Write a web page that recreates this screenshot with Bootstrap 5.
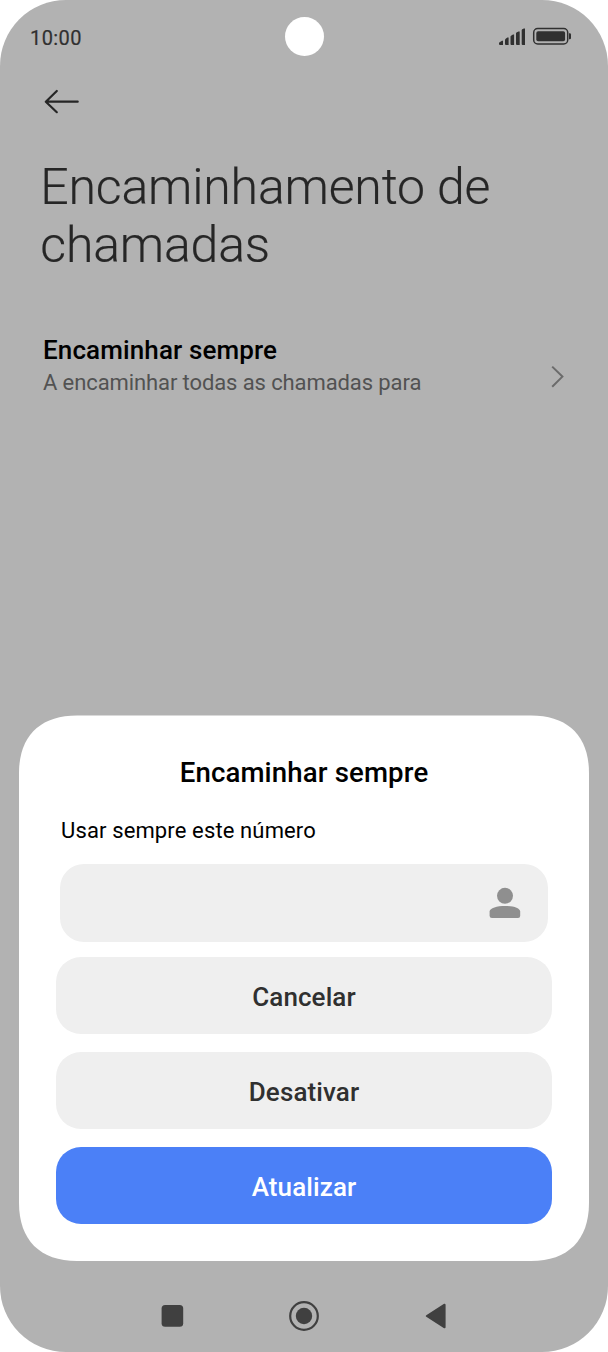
<!DOCTYPE html>
<html lang="pt">
<head>
<meta charset="utf-8">
<meta name="viewport" content="width=device-width, initial-scale=1">
<title>Encaminhamento de chamadas</title>
<link href="https://cdn.jsdelivr.net/npm/bootstrap@5.3.0/dist/css/bootstrap.min.css" rel="stylesheet">
<style>
  body { font-family: Roboto, "Liberation Sans", sans-serif; background: #fff; color: #000; }
  svg { display: block; flex: none; }
  .phone { width: 608px; height: 1352px; background: #b2b2b2; border-radius: 66px; }
  .statusbar { height: 74px; padding: 0 36px 0 30px; color: #303030; }
  .clock { font-size: 20px; line-height: 24px; letter-spacing: .4px; padding-top: 2px; -webkit-text-stroke: .2px #303030; }
  .camera { width: 39px; height: 39px; left: 284.5px; top: 17.3px; }
  .back { margin: 14px 0 0 44px; }
  .page-title { font-size: 50px; line-height: 58px; font-weight: 300; letter-spacing: -.18px; color: #262626; margin: 42px 0 0 40.3px; -webkit-text-stroke: .2px #262626; }
  .entry { margin: 59px 43px 0 43px; }
  .entry-name { font-size: 26px; line-height: 34px; font-weight: 500; letter-spacing: .12px; }
  .entry-info { font-size: 22px; line-height: 31px; letter-spacing: -.1px; color: #525252; }
  .sheet { width: 570px; height: 546px; margin: auto 19px 0 19px; padding: 40px 37px 0; background: #fff;
    clip-path: path("M0 58 C0 21 21 .4 58 .4 H512 C549 .4 570 21 570 58 V488 C570 525 549 546 512 546 H58 C21 546 0 525 0 488 Z"); }
  .sheet-title { font-size: 27.6px; line-height: 36px; font-weight: 500; letter-spacing: .14px; }
  .sheet-label { font-size: 22px; line-height: 30px; letter-spacing: .13px; margin: 25px 0 17.5px 5px; }
  .number-field { height: 78px; border-radius: 24px; background: #efefef; margin: 0 4px 15.5px; padding: 0 27px; }
  .sheet .btn { height: 77px; border: 0; border-radius: 25px; font-size: 26px; font-weight: 500; letter-spacing: .1px; background: #efefef; color: #303030; margin-bottom: 18.2px; padding: 3px 0 0; }
  .sheet .btn-update { background: #4b80f7; color: #fff; }
  .navkeys { height: 91px; padding: 19px 161px 0 161px; }
</style>
</head>
<body>
<div class="phone d-flex flex-column position-relative overflow-hidden">
  <header class="statusbar d-flex align-items-center justify-content-between">
    <span class="clock">10:00</span>
    <svg width="73" height="20" viewBox="0 0 73 20" fill="#303030">
      <path d="M0 16.3Q0 15.5 1 15L3 13.8H4V17.9H1Q0 17.9 0 17Z"/>
      <path d="M6 13Q6 12 7 11.4L8.4 10.6H9.6V17.9H7Q6 17.9 6 17Z"/>
      <path d="M11.5 9.7Q11.5 8.9 12.4 8.4L14 7.5H15.1V17.9H12.5Q11.5 17.9 11.5 17Z"/>
      <path d="M17 6.6Q17 5.8 17.9 5.3L19.5 4.4H20.7V17.9H18Q17 17.9 17 17Z"/>
      <path d="M22.7 3.4Q22.7 2.6 23.6 2.1L25 1.4H26V17.9H23.7Q22.7 17.9 22.7 17Z"/>
      <rect x="34.7" y="1.6" width="34" height="15.3" rx="4" fill="none" stroke="#303030" stroke-width="1.5"/>
      <rect x="37.3" y="4.2" width="28.8" height="10" rx="1.8"/>
      <path d="M70 6.2h.7q1.3 0 1.3 1.3v3.4q0 1.3-1.3 1.3H70z"/>
    </svg>
  </header>
  <span class="camera position-absolute rounded-circle bg-white"></span>

  <svg class="back" width="36" height="28" viewBox="0 0 36 28" fill="none" stroke="#262626" stroke-width="2.2" stroke-linecap="round" stroke-linejoin="round"><path d="M12.8 3 1.8 13.7 12.8 24.2M2.5 13.7H33.7"/></svg>
  <h1 class="page-title mb-0">Encaminhamento de<br>chamadas</h1>

  <div class="entry d-flex justify-content-between align-items-end">
    <div>
      <div class="entry-name">Encaminhar sempre</div>
      <div class="entry-info">A encaminhar todas as chamadas para</div>
    </div>
    <svg width="15" height="42" viewBox="0 0 15 42" fill="none" stroke="#6b6b6b" stroke-width="2"><path d="M2.2 10.6 12.4 20.6 2.2 30.7"/></svg>
  </div>

  <section class="sheet d-flex flex-column">
    <h2 class="sheet-title text-center mb-0">Encaminhar sempre</h2>
    <div class="sheet-label">Usar sempre este número</div>
    <div class="number-field d-flex align-items-center justify-content-end">
      <svg width="32" height="32" viewBox="0 0 32 32" fill="#8f8f8f"><circle cx="16" cy="8.8" r="8"/><path d="M.6 24.6C.6 17 31.2 17 31.2 24.6V28.8Q31.2 31 29 31H3Q.6 31 .6 28.8Z"/></svg>
    </div>
    <button type="button" class="btn w-100">Cancelar</button>
    <button type="button" class="btn w-100">Desativar</button>
    <button type="button" class="btn btn-update w-100">Atualizar</button>
  </section>

  <nav class="navkeys d-flex align-items-center justify-content-between">
    <svg width="23" height="38" viewBox="0 0 23 38"><rect x=".6" y="8.1" width="21.6" height="21.7" rx="3.5" fill="#404040"/></svg>
    <svg width="32" height="38" viewBox="0 0 32 38"><circle cx="16" cy="19" r="13.8" fill="none" stroke="#404040" stroke-width="2.2"/><circle cx="16" cy="19" r="8.2" fill="#404040"/></svg>
    <svg width="23" height="38" viewBox="0 0 23 38"><path d="M2.8 19 20.6 7.7V30.3Z" fill="#404040" stroke="#404040" stroke-width="2" stroke-linejoin="round"/></svg>
  </nav>
</div>
<script src="https://cdn.jsdelivr.net/npm/bootstrap@5.3.0/dist/js/bootstrap.bundle.min.js"></script>
</body>
</html>
